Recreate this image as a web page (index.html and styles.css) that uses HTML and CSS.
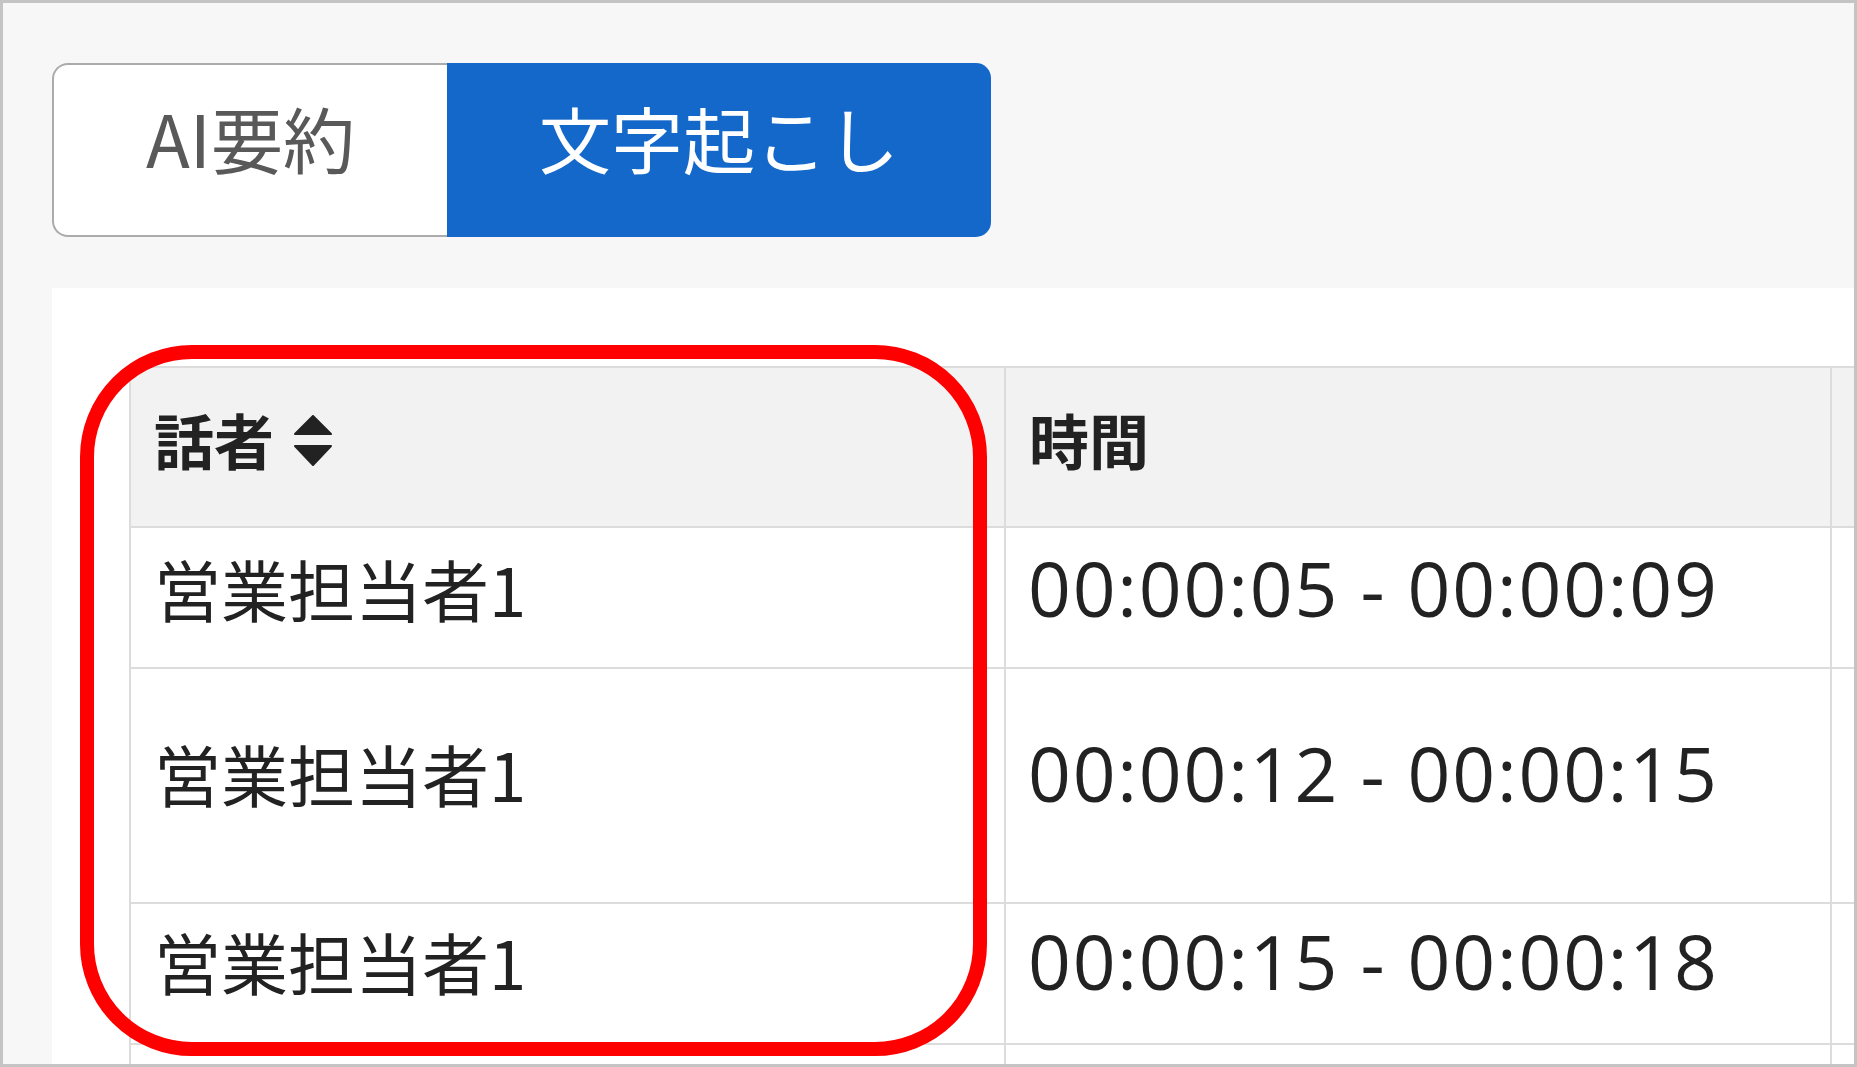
FILE: index.html
```html
<!DOCTYPE html>
<html lang="ja">
<head>
<meta charset="utf-8">
<title>文字起こし</title>
<link rel="stylesheet" href="styles.css">
</head>
<body>
<div class="frame">
  <div class="toggle">
    <div class="tab tab-ai">AI要約</div>
    <div class="tab tab-text">文字起こし</div>
  </div>
  <div class="panel">
    <div class="grid">
      <div class="cell head">話者<svg class="sort" viewBox="0 0 38 51" width="38" height="51"><path d="M19 1 L37 19 L1 19 Z" fill="#222" stroke="#222" stroke-width="2" stroke-linejoin="round"/><path d="M1 31 L37 31 L19 50 Z" fill="#222" stroke="#222" stroke-width="2" stroke-linejoin="round"/></svg></div>
      <div class="cell head">時間</div>
      <div class="cell head"></div>

      <div class="cell name">営業担当者1</div>
      <div class="cell time">00:00:05 - 00:00:09</div>
      <div class="cell"></div>

      <div class="cell name low">営業担当者1</div>
      <div class="cell time low">00:00:12 - 00:00:15</div>
      <div class="cell"></div>

      <div class="cell name low">営業担当者1</div>
      <div class="cell time low">00:00:15 - 00:00:18</div>
      <div class="cell"></div>

      <div class="cell"></div>
      <div class="cell"></div>
      <div class="cell"></div>
    </div>
  </div>
  <div class="highlight"></div>
</div>
</body>
</html>
```

FILE: styles.css
```css
html, body {
  margin: 0;
  padding: 0;
  overflow: hidden;
  background: #f7f7f7;
}

.frame {
  position: relative;
  box-sizing: border-box;
  width: 1857px;
  height: 1067px;
  border: 3px solid #c4c4c4;
  background: #f7f7f7;
  overflow: hidden;
  padding-top: 60px;
  font-family: "Noto Sans CJK JP", sans-serif;
  color: #222;
}

.toggle {
  display: flex;
  margin-left: 49px;
  height: 174px;
}

.tab {
  box-sizing: border-box;
  height: 174px;
  display: flex;
  align-items: center;
  justify-content: center;
  font-size: 72px;
  padding-bottom: 28px;
}

.tab-ai {
  width: 395px;
  background: #ffffff;
  border: 2px solid #ababab;
  border-right: none;
  border-radius: 16px 0 0 16px;
  color: #595959;
}

.tab-text {
  width: 544px;
  background: #1468c9;
  border-radius: 0 15px 15px 0;
  color: #ffffff;
}

.panel {
  margin-top: 51px;
  margin-left: 49px;
  background: #ffffff;
  padding-top: 78px;
  padding-left: 77px;
  height: 900px;
}

.grid {
  display: grid;
  grid-template-columns: 875px 826px 800px;
  grid-template-rows: 160px 141px 235px 141px 141px;
  border-top: 2px solid #dcdcdc;
  border-left: 2px solid #dcdcdc;
  width: max-content;
}

.cell {
  box-sizing: border-box;
  border-right: 2px solid #dcdcdc;
  border-bottom: 2px solid #dcdcdc;
  display: flex;
  align-items: center;
  padding-left: 23px;
  padding-bottom: 20px;
  white-space: nowrap;
}

.head {
  background: #f2f2f2;
  font-weight: 700;
  font-size: 60px;
  padding-bottom: 18px;
}

.sort {
  margin-left: 20px;
  margin-top: 4px;
}

.name {
  font-size: 67px;
}

.time {
  font-family: "Open Sans", "Noto Sans CJK JP", sans-serif;
  font-size: 75px;
  letter-spacing: 1.8px;
  padding-left: 22px;
}

.low {
  padding-bottom: 26px;
}

.highlight {
  position: absolute;
  left: 77px;
  top: 342px;
  width: 907px;
  height: 711px;
  box-sizing: border-box;
  border: 14px solid #ff0000;
  border-radius: 112px;
  pointer-events: none;
}
```
